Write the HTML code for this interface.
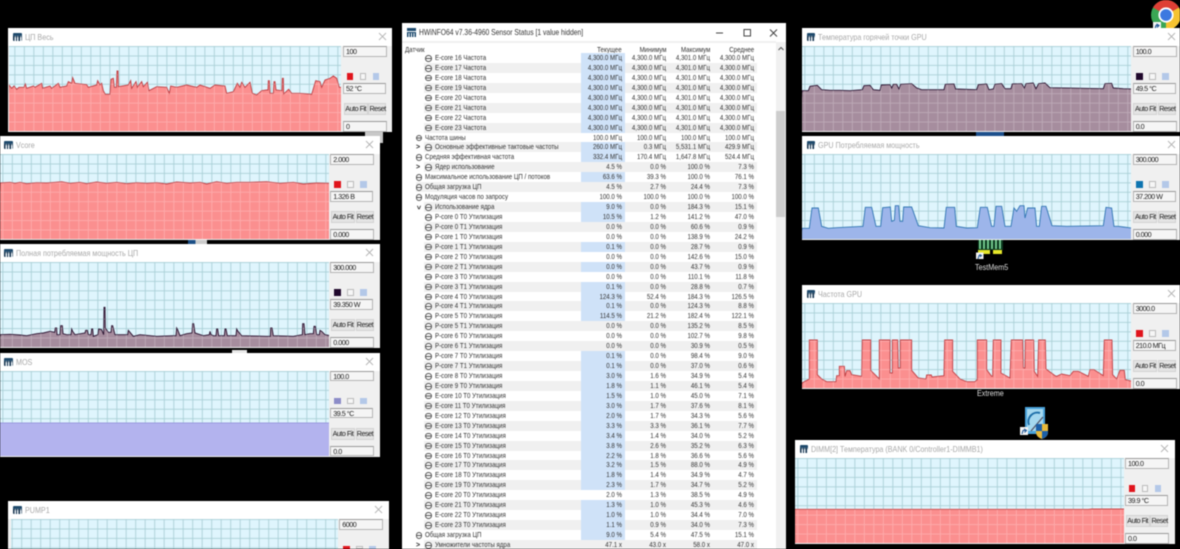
<!DOCTYPE html>
<html><head><meta charset="utf-8"><style>
html,body{margin:0;padding:0;background:#000;width:1180px;height:549px;overflow:hidden}
#root{position:absolute;left:0;top:0;width:1180px;height:549px;overflow:hidden;background:#000;font-family:"Liberation Sans","Noto Sans CJK SC",sans-serif;filter:blur(.4px)}
.w{position:absolute;height:104px;background:#f0f0f0;overflow:hidden}
.t{position:absolute;left:0;right:0;top:0;height:18px;background:#fff}
.ic{position:absolute;top:5px;width:8.5px;height:8px;background:linear-gradient(#1f4a6c 0 35%,transparent 35% 45%,#16344e 45% 50%,transparent 50%),repeating-linear-gradient(90deg,#16344e 0 1.4px,#e8eef4 1.4px 2.8px);border-radius:1px}
.tt{position:absolute;top:4px;font-size:8.4px;line-height:10px;color:#a8a8a8;white-space:nowrap;transform:scaleX(.855);transform-origin:0 0}
.x{position:absolute;top:4px;width:9px;height:9px}
.w svg.g{position:absolute;top:18px;height:85px}
.sd{position:absolute;top:0;width:50px;height:104px;font-size:7.2px;letter-spacing:-.5px;color:#222}
.bx{position:absolute;height:8.6px;border:1px solid #b4b4b4;border-top-color:#9a9a9a;background:#f5f5f5;line-height:9px;padding-left:2px;white-space:nowrap}
.sq{position:absolute;top:45px;width:6.6px;height:6.6px}
.sq.n{background:#f6f6f6;border:.6px solid #bbb;box-sizing:border-box}
.sq.u{background:#b3c8e8}
.bt{position:absolute;top:75px;height:12px;background:#e4e4e4;border:1px solid #d2d2d2;box-sizing:border-box;line-height:10px;text-align:center;white-space:nowrap}
#m{position:absolute;left:402px;top:23px;width:384px;height:526px;background:#fff;overflow:hidden;color:#333}
#m .tb{position:absolute;left:16.500px;top:4px;font-size:8.1px;line-height:12px;color:#333;white-space:nowrap;transform:scaleX(.835);transform-origin:0 0}
#hd{position:absolute;left:0;top:18px;width:374px;height:11px;background:#fff;border-top:2px solid #f0f0f0;font-size:7.2px}
#hd span{position:absolute;top:2px;line-height:10px;white-space:nowrap;transform:scaleX(.855);transform-origin:100% 0}
#hd span:first-child{transform-origin:0 0}
#rw{position:absolute;left:402px;top:53px;width:355px;height:496px;overflow:hidden;font-size:7.2px;color:#333}
.r{position:relative;height:9.95px;line-height:10px;white-space:nowrap}
.r.s::before{content:"";position:absolute;left:22px;right:0;top:0;bottom:0;background:#f0f0f0}
.r.l1.s::before{left:14px}
.r>*{position:absolute;top:0}
.r em{font-style:normal;left:32.7px;transform:scaleX(.855);transform-origin:0 0}
.r.l1 em{left:23px}
.r i{left:23px;top:2px;width:4.6px;height:4.6px;border:.8px solid #555;border-radius:50%;background:linear-gradient(#fff 0 43%,#555 43% 57%,#fff 57%)}
.r.l1 i{left:13.600px}
.ar{left:14px;top:2px!important;font-size:7px;line-height:7px;font-weight:700;color:#222}
.h{left:179px;width:44px;height:100%;background:#cfe2f8}
tt{font-family:inherit;width:44px;text-align:right;transform:scaleX(.855);transform-origin:100% 0}
.a{left:175.500px}.b{left:220px}.c{left:264px}.d{left:308px}
.lb{position:absolute;color:#ddd;font-size:8.4px;line-height:10px;white-space:nowrap;transform:scaleX(.86);transform-origin:0 0}
.p{position:absolute}
</style></head><body><div id="root">
<svg width="0" height="0" style="position:absolute"><defs>
<pattern id="g" width="28.5" height="28.3" patternUnits="userSpaceOnUse"><path d="M1.500 0V28.300M0 1.500H28.500" stroke="#a9cfd6" stroke-width="2.600" fill="none"/></pattern>
<pattern id="g2" width="28.5" height="28.3" patternUnits="userSpaceOnUse"><path d="M1.500 0V28.300M0 1.500H28.500" stroke="#fff" stroke-opacity=".26" stroke-width="2.600" fill="none"/></pattern>
</defs></svg>

<div class="p" style="left:365px;top:130px;width:18px;height:13px;background:#c8c8c8"></div>
<div class="p" style="left:188px;top:240px;width:19px;height:5px;background:linear-gradient(90deg,#1b4f86 0 40%,#ccc 40%)"></div>
<div class="p" style="left:232px;top:350px;width:15px;height:3px;background:#e8e8e8"></div>
<div class="p" style="left:976px;top:131px;width:28px;height:6px;background:#1c4f8c"></div>

<svg class="p" style="left:1146px;top:0;width:34px;height:30px" viewBox="0 0 34 30">
<circle cx="20" cy="15" r="15" fill="#3aa655"/>
<path d="M20 15L7 7.500A15 15 0 0 1 33 7.500Z" fill="#de3f35"/>
<path d="M20 15L33 7.500A15 15 0 0 1 20 30Z" fill="#f6c331"/>
<circle cx="20" cy="15" r="7.600" fill="#fff"/><circle cx="20" cy="15" r="5.800" fill="#3c78e0"/>
<rect x="7" y="22" width="8" height="8" fill="#f4f4f4"/><path d="M9 29L10 25.500L12 25.500M10.500 24L13 25.500L11 27.500" stroke="#245a98" stroke-width="1.200" fill="none"/>
</svg>

<svg class="p" style="left:975px;top:240px;width:32px;height:19px" viewBox="0 0 32 19">
<rect x="3" y="0" width="25" height="10" fill="#0c3a20"/>
<path d="M5 0V9M9 0V9M13 0V9M17 0V9M21 0V9M25 0V9" stroke="#7fd89a" stroke-width="1.700"/>
<rect x="3" y="10" width="12" height="4" fill="#e6e62a"/><rect x="18" y="10" width="9" height="4" fill="#e6e62a"/>
<rect x="1" y="12.500" width="7.500" height="6.500" fill="#f4f4f4"/>
<path d="M3 19L4 15.500H6M4.500 14.500L6.500 15.500L5 17" stroke="#245a98" fill="none"/>
</svg>
<div class="lb" style="left:974.500px;top:262px">TestMem5</div>
<div class="lb" style="left:977px;top:388px">Extreme</div>

<svg class="p" style="left:1019px;top:405px;width:30px;height:35px" viewBox="0 0 30 35">
<path d="M6 2H26V29H6Z" fill="#4aa3dc"/><path d="M8 4H24V26H8Z" fill="#a5d8ef"/>
<path d="M10 20A9 9 0 0 1 21 8" stroke="#1d6ea8" stroke-width="2" fill="none"/>
<path d="M12 26L24 12" stroke="#556" stroke-width="1.300"/>
<path d="M17 19H29V27Q29 32 23 34Q17 32 17 27Z" fill="#e8b93a"/><path d="M17 19H23V26H17Z" fill="#1b5fa8"/><path d="M23 26H29V27Q29 32 23 34Z" fill="#1b5fa8"/>
<rect x="1" y="22" width="8" height="8" fill="#f4f4f4"/><path d="M3 29L4 25.500H6.500M5 24L7.500 25.500L5.500 27.500" stroke="#245a98" stroke-width="1.100" fill="none"/>
</svg>

<!-- W1 -->
<div class="w" style="left:8.300px;top:28px;width:383.700px">
<div class="t"></div><div class="ic" style="left:5px"></div><div class="tt" style="left:16.700px">ЦП Весь</div>
<svg class="x" style="left:369.300px" viewBox="0 0 9 9"><path d="M1 1L8 8M8 1L1 8" stroke="#b5b5b5" stroke-width=".9"/></svg>
<svg class="g" style="left:.7px;width:332px" viewBox="0 0 996 255" preserveAspectRatio="none"><rect width="996" height="255" fill="#dff5fd"/><g transform="translate(16,0)"><rect x="-40" width="1040" height="255" fill="url(#g)"/></g>
<g transform="translate(-27,-138)"><clipPath id="c1"><use href="#p1"/></clipPath><path id="p1" fill="#fb8f8f" stroke="#c04045" stroke-width="2.800" d="M20,420L27,255 35,265 42,258 50,268 57,262 72,262 76,252 80,265 100,258 105,262 125,250 128,265 150,258 155,265 175,250 180,262 200,258 205,245 215,250 218,233 225,250 260,254 265,262 290,255 293,242 300,255 305,250 310,272 316,283 330,283 333,238 340,235 343,262 349,262 351,213 354,213 355,260 385,255 392,242 395,265 408,245 412,262 425,245 430,260 442,247 447,272 470,260 500,262 508,280 512,258 530,262 560,255 590,262 600,255 630,265 645,255 675,258 680,280 700,275 712,250 720,262 725,247 735,262 750,247 757,280 770,285 785,272 800,270 804,270 805,242 808,242 810,280 820,280 822,245 825,245 828,270 846,272 847,235 850,235 851,282 866,268 875,280 900,280 935,283 947,242 960,245 965,262 975,240 990,235 1000,228 1010,235 1018,262 1030,262L1030,420Z"/><g clip-path="url(#c1)"><g transform="translate(43,138)"><rect x="-40" width="1040" height="255" fill="url(#g2)"/></g></g></g></svg>
<div class="sd" style="left:334.700px">
<div class="bx" style="left:0;top:18px;width:40px">100</div>
<div class="sq" style="left:3.700px;background:#e0141c"></div><div class="sq n" style="left:16.700px"></div><div class="sq u" style="left:29.700px"></div>
<div class="bx" style="left:0;top:55px;width:39px">52 °C</div>
<div class="bt" style="left:.7px;width:24px">Auto Fit</div><div class="bt" style="left:25.500px;width:18px">Reset</div>
<div class="bx" style="left:0;top:93px;width:40px">0</div></div></div>

<!-- Vcore -->
<div class="w" style="left:-1px;top:136px;width:380.700px">
<div class="t"></div><div class="ic" style="left:5px"></div><div class="tt" style="left:16.700px">Vcore</div>
<svg class="x" style="left:365.500px" viewBox="0 0 9 9"><path d="M1 1L8 8M8 1L1 8" stroke="#b5b5b5" stroke-width=".9"/></svg>
<svg class="g" style="left:1px;width:329px" viewBox="0 0 987 255" preserveAspectRatio="none"><rect width="987" height="255" fill="#dff5fd"/><g transform="translate(7,0)"><rect x="-40" width="1040" height="255" fill="url(#g)"/></g>
<g transform="translate(0,-462)"><clipPath id="c2"><use href="#p2"/></clipPath><path id="p2" fill="#fb8f8f" stroke="#c04045" stroke-width="2.800" d="M-9,740L0,549 30,547 45,550 60,547 80,551 110,548 140,549 165,547 185,545 210,550 240,547 260,551 290,546 320,550 350,547 380,551 410,548 440,550 470,548 500,552 530,546 570,549 600,547 620,552 650,545 680,550 710,547 750,547 800,545 840,550 880,547 910,552 950,549 990,550L990,740Z"/><g clip-path="url(#c2)"><g transform="translate(7,462)"><rect x="-40" width="1040" height="255" fill="url(#g2)"/></g></g></g></svg>
<div class="sd" style="left:331.300px">
<div class="bx" style="left:0;top:18px;width:40px">2.000</div>
<div class="sq" style="left:3.700px;background:#e0141c"></div><div class="sq n" style="left:16.700px"></div><div class="sq u" style="left:29.700px"></div>
<div class="bx" style="left:0;top:55px;width:39px">1.326 В</div>
<div class="bt" style="left:.7px;width:24px">Auto Fit</div><div class="bt" style="left:25.500px;width:18px">Reset</div>
<div class="bx" style="left:0;top:93px;width:40px">0.000</div></div></div>

<!-- Power -->
<div class="w" style="left:-1px;top:244px;width:380.700px">
<div class="t"></div><div class="ic" style="left:5px"></div><div class="tt" style="left:16.700px">Полная потребляемая мощность ЦП</div>
<svg class="x" style="left:365.500px" viewBox="0 0 9 9"><path d="M1 1L8 8M8 1L1 8" stroke="#b5b5b5" stroke-width=".9"/></svg>
<svg class="g" style="left:1px;width:329px" viewBox="0 0 987 255" preserveAspectRatio="none"><rect width="987" height="255" fill="#dff5fd"/><g transform="translate(7,0)"><rect x="-40" width="1040" height="255" fill="url(#g)"/></g>
<g transform="translate(0,-67)"><clipPath id="c3"><use href="#p3"/></clipPath><path id="p3" fill="#a68d9e" stroke="#2a1230" stroke-width="2.800" d="M-9,340L0,285 30,284 60,286 80,288 110,282 130,280 150,275 164,278 166,265 170,265 171,285 180,285 182,258 187,258 189,282 200,285 213,285 215,268 218,275 225,285 255,280 257,272 262,272 265,285 273,285 275,268 278,268 280,290 294,285 296,268 305,270 311,285 312,203 315,203 316,265 325,278 333,278 335,258 338,258 345,285 370,285 383,285 385,272 390,278 400,290 420,285 470,290 520,288 528,288 530,265 533,270 540,288 560,282 576,280 578,252 581,252 585,280 610,288 628,285 630,275 633,285 640,288 648,288 650,268 653,268 656,288 673,288 675,268 678,268 682,288 708,288 710,268 714,275 725,288 800,290 811,290 812,265 816,265 820,288 880,290 907,285 908,252 912,252 915,285 930,282 940,282 942,260 946,260 950,285 958,285 960,272 965,275 975,285 990,288L990,340Z"/><g clip-path="url(#c3)"><g transform="translate(7,67)"><rect x="-40" width="1040" height="255" fill="url(#g2)"/></g></g></g></svg>
<div class="sd" style="left:331.300px">
<div class="bx" style="left:0;top:18px;width:40px">300.000</div>
<div class="sq" style="left:3.700px;background:#20082c"></div><div class="sq n" style="left:16.700px"></div><div class="sq u" style="left:29.700px"></div>
<div class="bx" style="left:0;top:55px;width:39px">39.350 W</div>
<div class="bt" style="left:.7px;width:24px">Auto Fit</div><div class="bt" style="left:25.500px;width:18px">Reset</div>
<div class="bx" style="left:0;top:93px;width:40px">0.000</div></div></div>

<!-- MOS -->
<div class="w" style="left:-1px;top:352.500px;width:380.700px">
<div class="t"></div><div class="ic" style="left:5px"></div><div class="tt" style="left:16.700px">MOS</div>
<svg class="x" style="left:365.500px" viewBox="0 0 9 9"><path d="M1 1L8 8M8 1L1 8" stroke="#b5b5b5" stroke-width=".9"/></svg>
<svg class="g" style="left:1px;width:329px" viewBox="0 0 987 255" preserveAspectRatio="none"><rect width="987" height="255" fill="#dff5fd"/><g transform="translate(7,0)"><rect x="-40" width="1040" height="255" fill="url(#g)"/></g>
<path fill="#b3b3ee" stroke="#9a9ade" stroke-width="3" d="M-9,300V156H990V300Z"/></svg>
<div class="sd" style="left:331.300px">
<div class="bx" style="left:0;top:18px;width:40px">100.0</div>
<div class="sq" style="left:3.700px;background:#8c8cc8"></div><div class="sq n" style="left:16.700px"></div><div class="sq u" style="left:29.700px"></div>
<div class="bx" style="left:0;top:55px;width:39px">39.5 °C</div>
<div class="bt" style="left:.7px;width:24px">Auto Fit</div><div class="bt" style="left:25.500px;width:18px">Reset</div>
<div class="bx" style="left:0;top:93px;width:40px">0.0</div></div></div>

<!-- PUMP1 -->
<div class="w" style="left:8.300px;top:501px;width:380.400px;height:48px">
<div class="t"></div><div class="ic" style="left:5px"></div><div class="tt" style="left:16.700px">PUMP1</div>
<svg class="x" style="left:365.500px" viewBox="0 0 9 9"><path d="M1 1L8 8M8 1L1 8" stroke="#b5b5b5" stroke-width=".9"/></svg>
<svg class="g" style="left:2.700px;width:327px;height:30px" viewBox="0 0 981 90" preserveAspectRatio="none"><rect width="981" height="90" fill="#dff5fd"/><g transform="translate(2,0)"><rect x="-40" width="1040" height="90" fill="url(#g)"/></g></svg>
<div class="sd" style="left:331px;height:48px;overflow:hidden">
<div class="bx" style="left:0;top:18px;width:40px">6000</div>
<div class="sq" style="left:3.700px;background:#e0141c;height:3px"></div><div class="sq n" style="left:16.700px;height:3px"></div><div class="sq u" style="left:29.700px;height:3px"></div>
</div></div>

<!-- GPU hot -->
<div class="w" style="left:801.700px;top:28px;width:378.300px">
<div class="t"></div><div class="ic" style="left:5px"></div><div class="tt" style="left:16.700px">Температура горячей точки GPU</div>
<svg class="x" style="left:365.500px" viewBox="0 0 9 9"><path d="M1 1L8 8M8 1L1 8" stroke="#b5b5b5" stroke-width=".9"/></svg>
<svg class="g" style="left:.3px;width:329.300px" viewBox="0 0 988 255" preserveAspectRatio="none"><rect width="988" height="255" fill="#dff5fd"/><g transform="translate(7,0)"><rect x="-40" width="1040" height="255" fill="url(#g)"/></g>
<g transform="translate(-36,-139)"><clipPath id="c4"><use href="#p4"/></clipPath><path id="p4" fill="#a68d9e" stroke="#2a1230" stroke-width="2.800" d="M28,410L36,273 55,273 60,260 82,257 95,270 120,272 150,272 180,273 217,270 222,258 240,257 250,270 270,272 274,256 300,255 305,265 310,254 320,254 327,268 332,254 365,252 380,265 395,270 462,270 466,254 492,253 497,268 560,270 565,255 590,253 597,270 610,268 615,254 635,252 645,267 663,267 667,253 695,252 703,265 708,252 730,250 738,267 746,252 765,250 780,264 940,267 945,252 965,251 970,265 1000,267 1032,268L1032,410Z"/><g clip-path="url(#c4)"><g transform="translate(43,139)"><rect x="-40" width="1040" height="255" fill="url(#g2)"/></g></g></g></svg>
<div class="sd" style="left:331px">
<div class="bx" style="left:0;top:18px;width:40px">100.0</div>
<div class="sq" style="left:3.700px;background:#20082c"></div><div class="sq n" style="left:16.700px"></div><div class="sq u" style="left:29.700px"></div>
<div class="bx" style="left:0;top:55px;width:39px">49.5 °C</div>
<div class="bt" style="left:.7px;width:24px">Auto Fit</div><div class="bt" style="left:25.500px;width:18px">Reset</div>
<div class="bx" style="left:0;top:93px;width:40px">0.0</div></div></div>

<!-- GPU power -->
<div class="w" style="left:801.700px;top:136px;width:378.300px">
<div class="t"></div><div class="ic" style="left:5px"></div><div class="tt" style="left:16.700px">GPU Потребляемая мощность</div>
<svg class="x" style="left:365.500px" viewBox="0 0 9 9"><path d="M1 1L8 8M8 1L1 8" stroke="#b5b5b5" stroke-width=".9"/></svg>
<svg class="g" style="left:.3px;width:329.300px" viewBox="0 0 988 255" preserveAspectRatio="none"><rect width="988" height="255" fill="#dff5fd"/><g transform="translate(7,0)"><rect x="-40" width="1040" height="255" fill="url(#g)"/></g>
<g transform="translate(-36,-463)"><path fill="#9db5ea" stroke="#3277b4" stroke-width="2.800" d="M28,740L36,686 58,686 66,625 85,625 95,680 115,686 140,684 219,680 226,623 245,623 258,680 272,680 278,624 301,622 305,665 313,662 316,618 326,618 330,665 338,665 341,622 365,622 385,678 420,684 462,685 469,623 494,623 499,680 530,685 562,684 571,623 592,623 605,680 612,680 618,620 635,620 645,680 663,680 672,625 680,635 690,618 702,618 705,655 713,625 735,625 740,680 748,680 755,620 768,620 786,678 830,680 940,678 948,623 965,625 972,680 985,680 1000,682 1032,686L1032,740Z"/></g></svg>
<div class="sd" style="left:331px">
<div class="bx" style="left:0;top:18px;width:40px">300.000</div>
<div class="sq" style="left:3.700px;background:#0d74b0"></div><div class="sq n" style="left:16.700px"></div><div class="sq u" style="left:29.700px"></div>
<div class="bx" style="left:0;top:55px;width:39px">37.200 W</div>
<div class="bt" style="left:.7px;width:24px">Auto Fit</div><div class="bt" style="left:25.500px;width:18px">Reset</div>
<div class="bx" style="left:0;top:93px;width:40px">0.000</div></div></div>

<!-- GPU freq -->
<div class="w" style="left:801.700px;top:285px;width:378.300px">
<div class="t"></div><div class="ic" style="left:5px"></div><div class="tt" style="left:16.700px">Частота GPU</div>
<svg class="x" style="left:365.500px" viewBox="0 0 9 9"><path d="M1 1L8 8M8 1L1 8" stroke="#b5b5b5" stroke-width=".9"/></svg>
<svg class="g" style="left:.3px;width:329.300px" viewBox="0 0 988 255" preserveAspectRatio="none"><rect width="988" height="255" fill="#dff5fd"/><g transform="translate(7,0)"><rect x="-40" width="1040" height="255" fill="url(#g)"/></g>
<g transform="translate(-36,-70)"><clipPath id="c6"><use href="#p6"/></clipPath><path id="p6" fill="#fb8f8f" stroke="#c04045" stroke-width="2.800" d="M28,345L36,310 45,305 58,298 58,181 82,181 82,285 95,298 110,306 138,306 140,288 148,288 148,260 163,260 165,290 170,273 180,273 185,285 215,290 217,181 242,181 242,272 268,298 268,181 300,181 300,280 307,280 307,181 323,181 325,265 331,265 331,181 365,181 365,272 385,295 408,298 410,286 424,286 426,292 462,288 464,181 488,181 488,275 510,298 530,306 555,306 562,300 562,181 590,181 590,270 605,290 608,290 610,181 633,181 633,280 660,295 664,181 698,181 700,265 705,265 706,181 731,181 733,275 743,290 746,181 766,181 768,268 795,288 800,290 815,283 840,288 850,275 865,275 895,290 900,270 912,270 940,288 943,181 966,181 968,285 980,298 990,272 1003,272 1006,300 1032,306L1032,345Z"/><g clip-path="url(#c6)"><g transform="translate(43,70)"><rect x="-40" width="1040" height="255" fill="url(#g2)"/></g></g></g></svg>
<div class="sd" style="left:331px">
<div class="bx" style="left:0;top:18px;width:40px">3000.0</div>
<div class="sq" style="left:3.700px;background:#e0141c"></div><div class="sq n" style="left:16.700px"></div><div class="sq u" style="left:29.700px"></div>
<div class="bx" style="left:0;top:55px;width:39px">210.0 МГц</div>
<div class="bt" style="left:.7px;width:24px">Auto Fit</div><div class="bt" style="left:25.500px;width:18px">Reset</div>
<div class="bx" style="left:0;top:93px;width:40px">0.0</div></div></div>

<!-- DIMM -->
<div class="w" style="left:794.700px;top:440px;width:380.300px">
<div class="t"></div><div class="ic" style="left:5px"></div><div class="tt" style="left:16.700px">DIMM[2] Температура (BANK 0/Controller1-DIMMB1)</div>
<svg class="x" style="left:365.500px" viewBox="0 0 9 9"><path d="M1 1L8 8M8 1L1 8" stroke="#b5b5b5" stroke-width=".9"/></svg>
<svg class="g" style="left:.3px;width:329px;top:17.500px" viewBox="0 0 987 255" preserveAspectRatio="none"><rect width="987" height="255" fill="#dff5fd"/><g transform="translate(7,0)"><rect x="-40" width="1040" height="255" fill="url(#g)"/></g>
<path fill="#fb8f8f" stroke="#c8484a" stroke-width="2.800" d="M-9,300V154H880L890,153H990V300Z"/><g transform="translate(7,0)"><rect x="-40" y="155" width="1040" height="100" fill="url(#g2)"/></g></svg>
<div class="sd" style="left:330.300px">
<div class="bx" style="left:0;top:18px;width:40px">100.0</div>
<div class="sq" style="left:3.700px;background:#e0141c"></div><div class="sq n" style="left:16.700px"></div><div class="sq u" style="left:29.700px"></div>
<div class="bx" style="left:0;top:55px;width:39px">39.9 °C</div>
<div class="bt" style="left:.7px;width:24px">Auto Fit</div><div class="bt" style="left:25.500px;width:18px">Reset</div>
<div class="bx" style="left:0;top:93px;width:40px">0.0</div></div></div>

<!-- main -->
<div id="m">
<svg class="p" style="left:5px;top:5px;width:9px;height:9px" viewBox="0 0 9 9"><rect width="9" height="9" fill="#1c4a6e"/><rect y="3" width="9" height="1" fill="#fff"/><path d="M2 5V9M4.500 5V9M7 5V9" stroke="#fff"/></svg>
<div class="tb">HWiNFO64 v7.36-4960 Sensor Status [1 value hidden]</div>
<svg class="p" style="left:310px;top:3px;width:72px;height:14px" viewBox="0 0 72 14"><path d="M4 7H11" stroke="#444"/><rect x="32" y="3.500" width="6.500" height="6.500" fill="none" stroke="#444"/><path d="M58 3.500L65 10.500M65 3.500L58 10.500" stroke="#444"/></svg>
<div id="hd"><span style="left:2.500px">Датчик</span><span style="right:154.500px">Текущее</span><span style="right:109.500px">Минимум</span><span style="right:65.500px">Максимум</span><span style="right:21.500px">Среднее</span></div>
<div class="p" style="left:374px;top:19px;width:10px;height:507px;background:#f0f0f0"></div>
<div class="p" style="left:374px;top:88px;width:9px;height:106px;background:#cdcdcd"></div>
<svg class="p" style="left:374px;top:22px;width:10px;height:8px" viewBox="0 0 10 8"><path d="M2.500 5L5 2.500L7.500 5" stroke="#555" fill="none"/></svg>
</div>
<div id="rw">
<div class="r"><span class="h"></span><i></i><em>E-core 16 Частота</em><tt class="a">4,300.0 МГц</tt><tt class="b">4,300.0 МГц</tt><tt class="c">4,301.0 МГц</tt><tt class="d">4,300.0 МГц</tt></div>
<div class="r s"><span class="h"></span><i></i><em>E-core 17 Частота</em><tt class="a">4,300.0 МГц</tt><tt class="b">4,300.0 МГц</tt><tt class="c">4,301.0 МГц</tt><tt class="d">4,300.0 МГц</tt></div>
<div class="r"><span class="h"></span><i></i><em>E-core 18 Частота</em><tt class="a">4,300.0 МГц</tt><tt class="b">4,300.0 МГц</tt><tt class="c">4,301.0 МГц</tt><tt class="d">4,300.0 МГц</tt></div>
<div class="r s"><span class="h"></span><i></i><em>E-core 19 Частота</em><tt class="a">4,300.0 МГц</tt><tt class="b">4,300.0 МГц</tt><tt class="c">4,301.0 МГц</tt><tt class="d">4,300.0 МГц</tt></div>
<div class="r"><span class="h"></span><i></i><em>E-core 20 Частота</em><tt class="a">4,300.0 МГц</tt><tt class="b">4,300.0 МГц</tt><tt class="c">4,301.0 МГц</tt><tt class="d">4,300.0 МГц</tt></div>
<div class="r s"><span class="h"></span><i></i><em>E-core 21 Частота</em><tt class="a">4,300.0 МГц</tt><tt class="b">4,300.0 МГц</tt><tt class="c">4,301.0 МГц</tt><tt class="d">4,300.0 МГц</tt></div>
<div class="r"><span class="h"></span><i></i><em>E-core 22 Частота</em><tt class="a">4,300.0 МГц</tt><tt class="b">4,300.0 МГц</tt><tt class="c">4,301.0 МГц</tt><tt class="d">4,300.0 МГц</tt></div>
<div class="r s"><span class="h"></span><i></i><em>E-core 23 Частота</em><tt class="a">4,300.0 МГц</tt><tt class="b">4,300.0 МГц</tt><tt class="c">4,301.0 МГц</tt><tt class="d">4,300.0 МГц</tt></div>
<div class="r l1"><i></i><em>Частота шины</em><tt class="a">100.0 МГц</tt><tt class="b">100.0 МГц</tt><tt class="c">100.0 МГц</tt><tt class="d">100.0 МГц</tt></div>
<div class="r s"><span class="h"></span><span class="ar">&gt;</span><i></i><em>Основные эффективные тактовые частоты</em><tt class="a">260.0 МГц</tt><tt class="b">0.3 МГц</tt><tt class="c">5,531.1 МГц</tt><tt class="d">429.9 МГц</tt></div>
<div class="r l1"><span class="h"></span><i></i><em>Средняя эффективная частота</em><tt class="a">332.4 МГц</tt><tt class="b">170.4 МГц</tt><tt class="c">1,647.8 МГц</tt><tt class="d">524.4 МГц</tt></div>
<div class="r s"><span class="ar">&gt;</span><i></i><em>Ядер использование</em><tt class="a">4.5 %</tt><tt class="b">0.0 %</tt><tt class="c">100.0 %</tt><tt class="d">7.3 %</tt></div>
<div class="r l1"><span class="h"></span><i></i><em>Максимальное использование ЦП / потоков</em><tt class="a">63.6 %</tt><tt class="b">39.3 %</tt><tt class="c">100.0 %</tt><tt class="d">76.1 %</tt></div>
<div class="r l1 s"><i></i><em>Общая загрузка ЦП</em><tt class="a">4.5 %</tt><tt class="b">2.7 %</tt><tt class="c">24.4 %</tt><tt class="d">7.3 %</tt></div>
<div class="r l1"><i></i><em>Модуляция часов по запросу</em><tt class="a">100.0 %</tt><tt class="b">100.0 %</tt><tt class="c">100.0 %</tt><tt class="d">100.0 %</tt></div>
<div class="r s"><span class="h"></span><span class="ar" style="transform:rotate(90deg)">&gt;</span><i></i><em>Использование ядра</em><tt class="a">9.0 %</tt><tt class="b">0.0 %</tt><tt class="c">184.3 %</tt><tt class="d">15.1 %</tt></div>
<div class="r"><span class="h"></span><i></i><em>P-core 0 T0 Утилизация</em><tt class="a">10.5 %</tt><tt class="b">1.2 %</tt><tt class="c">141.2 %</tt><tt class="d">47.0 %</tt></div>
<div class="r s"><i></i><em>P-core 0 T1 Утилизация</em><tt class="a">0.0 %</tt><tt class="b">0.0 %</tt><tt class="c">60.6 %</tt><tt class="d">0.9 %</tt></div>
<div class="r"><i></i><em>P-core 1 T0 Утилизация</em><tt class="a">0.0 %</tt><tt class="b">0.0 %</tt><tt class="c">138.9 %</tt><tt class="d">24.2 %</tt></div>
<div class="r s"><span class="h"></span><i></i><em>P-core 1 T1 Утилизация</em><tt class="a">0.1 %</tt><tt class="b">0.0 %</tt><tt class="c">28.7 %</tt><tt class="d">0.9 %</tt></div>
<div class="r"><i></i><em>P-core 2 T0 Утилизация</em><tt class="a">0.0 %</tt><tt class="b">0.0 %</tt><tt class="c">142.6 %</tt><tt class="d">15.0 %</tt></div>
<div class="r s"><span class="h"></span><i></i><em>P-core 2 T1 Утилизация</em><tt class="a">0.0 %</tt><tt class="b">0.0 %</tt><tt class="c">43.7 %</tt><tt class="d">0.9 %</tt></div>
<div class="r"><i></i><em>P-core 3 T0 Утилизация</em><tt class="a">0.0 %</tt><tt class="b">0.0 %</tt><tt class="c">110.1 %</tt><tt class="d">11.8 %</tt></div>
<div class="r s"><span class="h"></span><i></i><em>P-core 3 T1 Утилизация</em><tt class="a">0.1 %</tt><tt class="b">0.0 %</tt><tt class="c">28.8 %</tt><tt class="d">0.7 %</tt></div>
<div class="r"><span class="h"></span><i></i><em>P-core 4 T0 Утилизация</em><tt class="a">124.3 %</tt><tt class="b">52.4 %</tt><tt class="c">184.3 %</tt><tt class="d">126.5 %</tt></div>
<div class="r s"><span class="h"></span><i></i><em>P-core 4 T1 Утилизация</em><tt class="a">0.1 %</tt><tt class="b">0.0 %</tt><tt class="c">124.3 %</tt><tt class="d">8.8 %</tt></div>
<div class="r"><span class="h"></span><i></i><em>P-core 5 T0 Утилизация</em><tt class="a">114.5 %</tt><tt class="b">21.2 %</tt><tt class="c">182.4 %</tt><tt class="d">122.1 %</tt></div>
<div class="r s"><i></i><em>P-core 5 T1 Утилизация</em><tt class="a">0.0 %</tt><tt class="b">0.0 %</tt><tt class="c">135.2 %</tt><tt class="d">8.5 %</tt></div>
<div class="r"><i></i><em>P-core 6 T0 Утилизация</em><tt class="a">0.0 %</tt><tt class="b">0.0 %</tt><tt class="c">102.7 %</tt><tt class="d">9.8 %</tt></div>
<div class="r s"><i></i><em>P-core 6 T1 Утилизация</em><tt class="a">0.0 %</tt><tt class="b">0.0 %</tt><tt class="c">30.9 %</tt><tt class="d">0.5 %</tt></div>
<div class="r"><span class="h"></span><i></i><em>P-core 7 T0 Утилизация</em><tt class="a">0.1 %</tt><tt class="b">0.0 %</tt><tt class="c">98.4 %</tt><tt class="d">9.0 %</tt></div>
<div class="r s"><span class="h"></span><i></i><em>P-core 7 T1 Утилизация</em><tt class="a">0.1 %</tt><tt class="b">0.0 %</tt><tt class="c">37.0 %</tt><tt class="d">0.6 %</tt></div>
<div class="r"><span class="h"></span><i></i><em>E-core 8 T0 Утилизация</em><tt class="a">3.0 %</tt><tt class="b">1.6 %</tt><tt class="c">34.9 %</tt><tt class="d">5.4 %</tt></div>
<div class="r s"><span class="h"></span><i></i><em>E-core 9 T0 Утилизация</em><tt class="a">1.8 %</tt><tt class="b">1.1 %</tt><tt class="c">46.1 %</tt><tt class="d">5.4 %</tt></div>
<div class="r"><span class="h"></span><i></i><em>E-core 10 T0 Утилизация</em><tt class="a">1.5 %</tt><tt class="b">1.0 %</tt><tt class="c">45.0 %</tt><tt class="d">7.1 %</tt></div>
<div class="r s"><span class="h"></span><i></i><em>E-core 11 T0 Утилизация</em><tt class="a">3.0 %</tt><tt class="b">1.7 %</tt><tt class="c">37.6 %</tt><tt class="d">8.1 %</tt></div>
<div class="r"><span class="h"></span><i></i><em>E-core 12 T0 Утилизация</em><tt class="a">2.0 %</tt><tt class="b">1.7 %</tt><tt class="c">34.3 %</tt><tt class="d">5.6 %</tt></div>
<div class="r s"><span class="h"></span><i></i><em>E-core 13 T0 Утилизация</em><tt class="a">3.3 %</tt><tt class="b">3.3 %</tt><tt class="c">36.1 %</tt><tt class="d">7.7 %</tt></div>
<div class="r"><span class="h"></span><i></i><em>E-core 14 T0 Утилизация</em><tt class="a">3.4 %</tt><tt class="b">1.4 %</tt><tt class="c">34.0 %</tt><tt class="d">5.2 %</tt></div>
<div class="r s"><span class="h"></span><i></i><em>E-core 15 T0 Утилизация</em><tt class="a">3.8 %</tt><tt class="b">2.6 %</tt><tt class="c">35.2 %</tt><tt class="d">6.3 %</tt></div>
<div class="r"><span class="h"></span><i></i><em>E-core 16 T0 Утилизация</em><tt class="a">2.2 %</tt><tt class="b">1.8 %</tt><tt class="c">36.6 %</tt><tt class="d">5.6 %</tt></div>
<div class="r s"><span class="h"></span><i></i><em>E-core 17 T0 Утилизация</em><tt class="a">3.2 %</tt><tt class="b">1.5 %</tt><tt class="c">88.0 %</tt><tt class="d">4.9 %</tt></div>
<div class="r"><span class="h"></span><i></i><em>E-core 18 T0 Утилизация</em><tt class="a">1.8 %</tt><tt class="b">1.4 %</tt><tt class="c">34.9 %</tt><tt class="d">4.7 %</tt></div>
<div class="r s"><span class="h"></span><i></i><em>E-core 19 T0 Утилизация</em><tt class="a">2.3 %</tt><tt class="b">1.7 %</tt><tt class="c">34.7 %</tt><tt class="d">5.2 %</tt></div>
<div class="r"><i></i><em>E-core 20 T0 Утилизация</em><tt class="a">2.0 %</tt><tt class="b">1.3 %</tt><tt class="c">38.5 %</tt><tt class="d">4.9 %</tt></div>
<div class="r s"><span class="h"></span><i></i><em>E-core 21 T0 Утилизация</em><tt class="a">1.3 %</tt><tt class="b">1.0 %</tt><tt class="c">45.3 %</tt><tt class="d">4.6 %</tt></div>
<div class="r"><span class="h"></span><i></i><em>E-core 22 T0 Утилизация</em><tt class="a">1.0 %</tt><tt class="b">1.0 %</tt><tt class="c">34.4 %</tt><tt class="d">7.0 %</tt></div>
<div class="r s"><span class="h"></span><i></i><em>E-core 23 T0 Утилизация</em><tt class="a">1.1 %</tt><tt class="b">0.9 %</tt><tt class="c">34.0 %</tt><tt class="d">7.3 %</tt></div>
<div class="r l1"><span class="h"></span><i></i><em>Общая загрузка ЦП</em><tt class="a">9.0 %</tt><tt class="b">5.4 %</tt><tt class="c">47.5 %</tt><tt class="d">15.1 %</tt></div>
<div class="r s"><span class="ar">&gt;</span><i></i><em>Умножители частоты ядра</em><tt class="a">47.1 x</tt><tt class="b">43.0 x</tt><tt class="c">58.0 x</tt><tt class="d">47.0 x</tt></div>
</div>
</div></body></html>
